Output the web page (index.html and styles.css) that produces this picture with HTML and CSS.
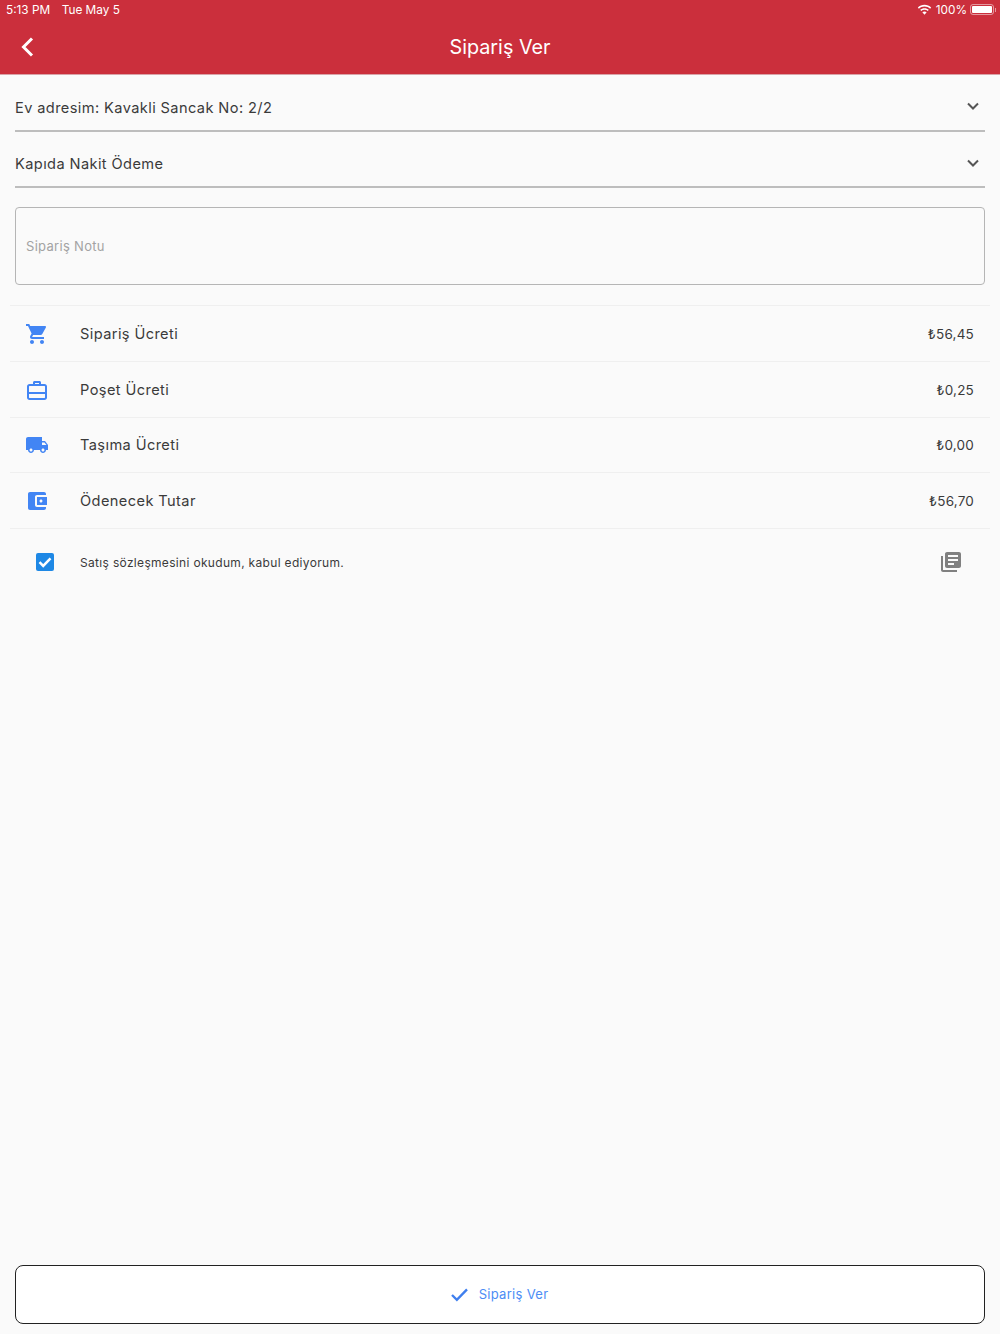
FILE: index.html
```html
<!DOCTYPE html>
<html lang="tr">
<head>
    <meta charset="UTF-8">
    <meta name="viewport" content="width=device-width, initial-scale=1.0">
    <title>Sipariş Ver</title>
    <link rel="stylesheet" href="styles.css">
</head>
<body>
    <div class="page">
        <header class="app-header">
            <div class="status-bar">
                <div class="status-left">
                    <span>5:13 PM</span>
                    <span>Tue May 5</span>
                </div>
                <div class="status-right">
                    <svg class="wifi-icon" viewBox="0 0 16 12">
                        <path d="M8 2.200c2.300 0 4.400.9 6 2.400l1.100-1.200C13.200 1.600 10.700.5 8 .5S2.800 1.600.9 3.400L2 4.600c1.600-1.500 3.700-2.400 6-2.400z"/>
                        <path d="M8 5.700c1.300 0 2.500.5 3.500 1.300l1.100-1.200C11.400 4.700 9.800 4 8 4s-3.400.7-4.600 1.800L4.500 7c1-.8 2.200-1.300 3.500-1.300z"/>
                        <path d="M8 7.500c-.9 0-1.700.3-2.300.9L8 11l2.300-2.600c-.6-.6-1.400-.9-2.300-.9z"/>
                    </svg>
                    <span>100%</span>
                    <div class="battery"><div class="battery-fill"></div></div>
                    <div class="battery-tip"></div>
                </div>
            </div>
            <div class="title-bar">
                <svg class="back-icon" viewBox="0 0 14 20">
                    <path d="M12 1.500L3.500 10l8.500 8.500" />
                </svg>
                <h1>Sipariş Ver</h1>
            </div>
        </header>

        <main class="content">
            <div class="select-row">
                <span>Ev adresim: Kavakli Sancak No: 2/2</span>
                <svg class="chevron" viewBox="0 0 12 8"><path d="M1 1.500l5 5 5-5"/></svg>
            </div>
            <div class="select-row">
                <span>Kapıda Nakit Ödeme</span>
                <svg class="chevron" viewBox="0 0 12 8"><path d="M1 1.500l5 5 5-5"/></svg>
            </div>

            <div class="note-box">Sipariş Notu</div>

            <div class="price-list">
                <div class="price-row">
                    <svg class="row-icon" viewBox="0 0 24 24"><path d="M7 18c-1.100 0-1.990.9-1.990 2S5.900 22 7 22s2-.9 2-2-.9-2-2-2zM1 2v2h2l3.600 7.590-1.350 2.450c-.16.280-.25.610-.25.960 0 1.100.9 2 2 2h12v-2H7.420c-.14 0-.25-.11-.25-.25l.03-.12.9-1.630h7.450c.75 0 1.410-.41 1.750-1.030l3.580-6.490c.08-.14.120-.31.120-.48 0-.55-.45-1-1-1H5.210l-.94-2H1zm16 16c-1.100 0-1.990.9-1.990 2s.89 2 1.990 2 2-.9 2-2-.9-2-2-2z"/></svg>
                    <span class="row-label">Sipariş Ücreti</span>
                    <span class="row-value">₺56,45</span>
                </div>
                <div class="price-row">
                    <svg class="row-icon" viewBox="0 0 24 24"><path fill-rule="evenodd" d="M4.500 6H8V4.500C8 3.700 8.700 3 9.500 3h5c.8 0 1.500.7 1.500 1.500V6h3.500C20.900 6 22 7.100 22 8.500v11c0 1.400-1.100 2.500-2.500 2.500h-15C3.100 22 2 20.900 2 19.500v-11C2 7.100 3.100 6 4.500 6zM10 6h4V5h-4v1zM4.500 8c-.3 0-.5.200-.5.500V14h16V8.500c0-.3-.2-.5-.5-.5h-15zM4 16v3.500c0 .3.200.5.500.5h15c.3 0 .5-.2.5-.5V16H4z"/></svg>
                    <span class="row-label">Poşet Ücreti</span>
                    <span class="row-value">₺0,25</span>
                </div>
                <div class="price-row">
                    <svg class="row-icon" viewBox="0 0 24 24"><path d="M20 8h-3V4H3c-1.100 0-2 .9-2 2v11h2c0 1.660 1.340 3 3 3s3-1.340 3-3h6c0 1.660 1.340 3 3 3s3-1.340 3-3h2v-5l-3-4zM6 18.500c-.83 0-1.500-.67-1.500-1.500s.67-1.500 1.500-1.500 1.500.67 1.500 1.500-.67 1.500-1.500 1.500zm13.500-9l1.960 2.500H17V9.500h2.500zm-1.500 9c-.83 0-1.500-.67-1.500-1.500s.67-1.500 1.500-1.500 1.500.67 1.500 1.500-.67 1.500-1.500 1.500z"/></svg>
                    <span class="row-label">Taşıma Ücreti</span>
                    <span class="row-value">₺0,00</span>
                </div>
                <div class="price-row">
                    <svg class="row-icon" viewBox="0 0 24 24"><path d="M21 18v1c0 1.100-.9 2-2 2H5c-1.110 0-2-.9-2-2V5c0-1.100.89-2 2-2h14c1.100 0 2 .9 2 2v1h-9c-1.110 0-2 .9-2 2v8c0 1.100.89 2 2 2h9zm-9-2h10V8H12v8zm4-2.500c-.83 0-1.500-.67-1.500-1.500s.67-1.500 1.500-1.500 1.500.67 1.500 1.500-.67 1.500-1.500 1.500z"/></svg>
                    <span class="row-label">Ödenecek Tutar</span>
                    <span class="row-value">₺56,70</span>
                </div>
            </div>

            <div class="agreement-row">
                <div class="checkbox">
                    <svg viewBox="0 0 18 18"><path d="M3.500 9.200l3.700 3.700 7.300-7.600"/></svg>
                </div>
                <span class="agreement-text">Satış sözleşmesini okudum, kabul ediyorum.</span>
                <svg class="doc-icon" viewBox="0 0 24 24"><path d="M4 6H2v14c0 1.100.9 2 2 2h14v-2H4V6zm16-4H8c-1.100 0-2 .9-2 2v12c0 1.100.9 2 2 2h12c1.100 0 2-.9 2-2V4c0-1.100-.9-2-2-2zm-1 9H9V9h10v2zm-4 4H9v-2h6v2zm4-8H9V5h10v2z"/></svg>
            </div>
        </main>

        <button class="submit-btn" type="button">
            <svg viewBox="0 0 20 16"><path d="M2 8.500l5.200 5.200L18 2.500"/></svg>
            <span>Sipariş Ver</span>
        </button>
    </div>
</body>
</html>
```

FILE: styles.css
```css
* {
    margin: 0;
    padding: 0;
    box-sizing: border-box;
}

body {
    font-family: Inter, "Noto Sans", "DejaVu Sans", sans-serif;
    background: #fafafa;
    color: #2b2b2b;
}

.page {
    height: 1334px;
    display: flex;
    flex-direction: column;
    overflow: hidden;
}

.app-header {
    height: 75px;
    background: #cb2f3c;
    color: white;
    border-bottom: 1px solid #d9a3a8;
}

.status-bar {
    height: 19px;
    padding: 0 5px 0 6px;
    display: flex;
    justify-content: space-between;
    align-items: center;
    font-size: 11.800px;
}

.status-left {
    display: flex;
    gap: 11.500px;
}

.status-right {
    display: flex;
    align-items: center;
}

.wifi-icon {
    width: 15px;
    height: 12px;
    fill: white;
    margin-right: 4px;
}

.battery {
    width: 24px;
    height: 11px;
    margin-left: 3px;
    padding: 1px;
    border: 1px solid rgba(255,255,255,0.5);
    border-radius: 3px;
}

.battery-fill {
    height: 100%;
    background: white;
    border-radius: 1px;
}

.battery-tip {
    width: 1px;
    height: 4px;
    margin-left: 1px;
    margin-right: -1px;
    background: rgba(255,255,255,0.5);
}

.title-bar {
    position: relative;
    height: 55px;
    display: flex;
    align-items: center;
    justify-content: center;
}

.title-bar h1 {
    font-size: 19.800px;
    font-weight: 400;
}

.back-icon {
    position: absolute;
    left: 20px;
    top: 18px;
    width: 14px;
    height: 20px;
    fill: none;
    stroke: white;
    stroke-width: 3;
}

.content {
    flex: 1;
    padding: 0 15px;
}

.select-row {
    height: 56.500px;
    padding-top: 11px;
    display: flex;
    align-items: center;
    justify-content: space-between;
    border-bottom: 2px solid #bdbdbd;
    font-size: 14.600px;
    letter-spacing: 0.4px;
    color: #3a3a3a;
}

.chevron {
    width: 12px;
    height: 8px;
    margin-right: 6px;
    margin-bottom: 3px;
    fill: none;
    stroke: #555;
    stroke-width: 2;
}

.note-box {
    height: 78px;
    margin-top: 19px;
    padding-left: 10px;
    display: flex;
    align-items: center;
    background: #fafafa;
    border: 1px solid #b5b5b5;
    border-radius: 4px;
    font-size: 13px;
    letter-spacing: 0.3px;
    color: #a3a3a3;
}

.price-list {
    margin: 20px -5px 0;
    border-top: 1px solid #efefef;
}

.price-row {
    height: 55.800px;
    padding: 1px 16px 0 15px;
    display: flex;
    align-items: center;
    border-bottom: 1px solid #efefef;
}

.row-icon {
    width: 24px;
    height: 24px;
    fill: #4285f4;
    flex-shrink: 0;
}

.row-label {
    flex: 1;
    margin-left: 31px;
    font-size: 14.600px;
    letter-spacing: 0.4px;
    color: #3a3a3a;
}

.row-value {
    font-size: 13.500px;
    letter-spacing: 0.2px;
    color: #3a3a3a;
}

.agreement-row {
    height: 66px;
    padding: 0 22px 0 21px;
    display: flex;
    align-items: center;
}

.checkbox {
    width: 18px;
    height: 18px;
    background: #1e88e5;
    border-radius: 2px;
    flex-shrink: 0;
}

.checkbox svg {
    display: block;
    width: 18px;
    height: 18px;
    fill: none;
    stroke: white;
    stroke-width: 2.500;
}

.agreement-text {
    flex: 1;
    margin-left: 26px;
    font-size: 12px;
    letter-spacing: 0.32px;
    color: #3a3a3a;
}

.doc-icon {
    width: 24px;
    height: 24px;
    fill: #808080;
}

.submit-btn {
    height: 59px;
    margin: 0 15px 10px;
    padding: 0 2px 1px 0;
    display: flex;
    align-items: center;
    justify-content: center;
    gap: 10px;
    background: white;
    border: 1px solid #222;
    border-radius: 8px;
    font-family: inherit;
    font-size: 13px;
    letter-spacing: 0.3px;
    color: #4d8df5;
}

.submit-btn svg {
    width: 19px;
    height: 15px;
    fill: none;
    stroke: #3f7fee;
    stroke-width: 2.500;
}
```
